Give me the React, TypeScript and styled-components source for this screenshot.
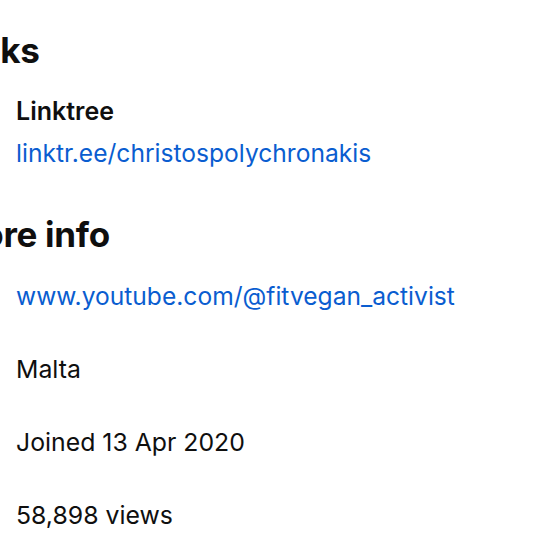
import React from "react";
import styled, { createGlobalStyle } from "styled-components";

const Global = createGlobalStyle`
  html, body { margin: 0; padding: 0; background: #ffffff; }
  body { font-family: Inter, "Noto Sans", sans-serif; color: #0f0f0f; overflow: hidden; }
`;

const Page = styled.div`
  width: 640px;
  margin-left: -50px;
  padding-top: 30px;
  display: flex;
  flex-direction: column;
`;

const Section = styled.section<{ $gapAfter?: number }>`
  display: flex;
  flex-direction: column;
  margin-bottom: ${(p) => p.$gapAfter ?? 0}px;
`;

const Heading = styled.h2`
  margin: 0;
  font-size: 35px;
  line-height: 40px;
  font-weight: 700;
  letter-spacing: -0.3px;
`;

const List = styled.div<{ $top: number }>`
  display: flex;
  flex-direction: column;
  gap: 43px;
  padding-left: 66px;
  margin-top: ${(p) => p.$top}px;
`;

const LinkItem = styled.div`
  display: flex;
  flex-direction: column;
  gap: 12px;
`;

const LinkTitle = styled.div`
  font-size: 25px;
  line-height: 30px;
  font-weight: 600;
`;

const Anchor = styled.a`
  font-size: 24.6px;
  line-height: 30px;
  color: #0a5dd0;
  text-decoration: none;
`;

const InfoRow = styled.div`
  font-size: 24.8px;
  line-height: 30px;
`;

export default function App() {
  return (
    <>
      <Global />
      <Page>
        <Section $gapAfter={46}>
          <Heading>Links</Heading>
          <List $top={26}>
            <LinkItem>
              <LinkTitle>Linktree</LinkTitle>
              <Anchor href="#">linktr.ee/christospolychronakis</Anchor>
            </LinkItem>
          </List>
        </Section>
        <Section>
          <Heading>More info</Heading>
          <List $top={27}>
            <Anchor href="#">www.youtube.com/@fitvegan_activist</Anchor>
            <InfoRow>Malta</InfoRow>
            <InfoRow>Joined 13 Apr 2020</InfoRow>
            <InfoRow>58,898 views</InfoRow>
          </List>
        </Section>
      </Page>
    </>
  );
}
